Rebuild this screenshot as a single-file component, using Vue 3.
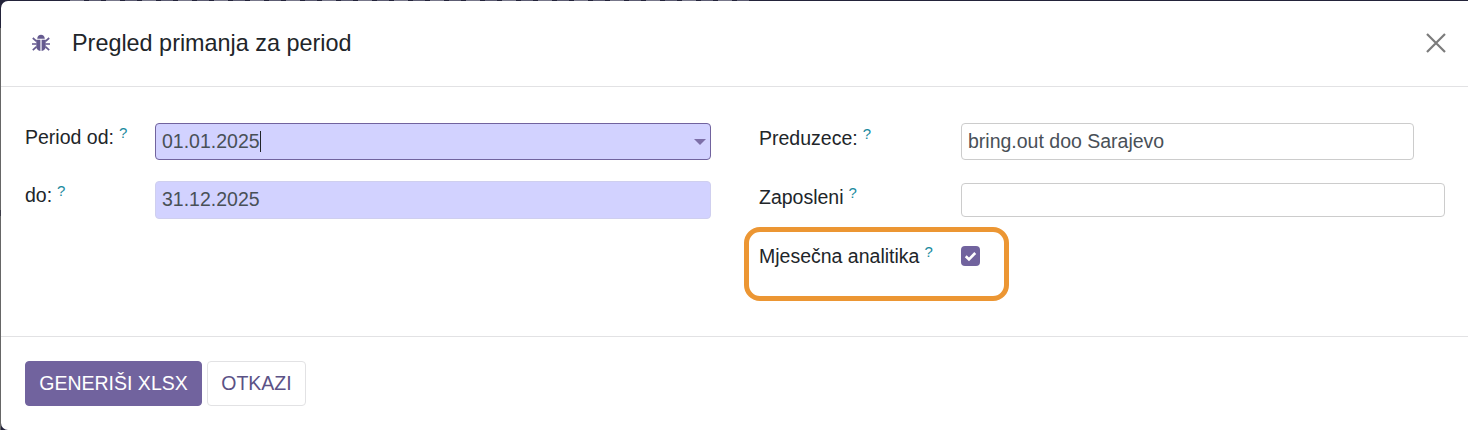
<template>
  <div class="backdrop">
    <div class="dialog">
      <header class="head">
        <svg class="bug" viewBox="0 0 20 20" aria-hidden="true">
          <path d="M6.2 5.800C6.300 3.400 8 1.800 10 1.800s3.700 1.600 3.800 4z" />
          <path d="M5.300 6.800h4.100v11.100c-2.500-.2-4.100-1.800-4.100-4.300zM10.600 6.800h4.100v6.800c0 2.500-1.600 4.100-4.100 4.300z" />
          <path class="legs" d="M1.800 5l3.800 3.400M18.200 5l-3.800 3.400M1 11h4.500M19 11h-4.500M1.800 17.200l3.800-3.500M18.200 17.200l-3.800-3.500" />
        </svg>
        <h1 class="title">Pregled primanja za period</h1>
        <svg class="close" viewBox="0 0 20 20" aria-hidden="true">
          <path d="M1 1l18 18M19 1L1 19" />
        </svg>
      </header>

      <section class="body">
        <div class="col">
          <div class="row row-first">
            <label>Period od:<sup>?</sup></label>
            <div class="input required focused">
              <span>01.01.2025</span><i class="caret"></i>
              <b class="arrow"></b>
            </div>
          </div>
          <div class="row row-second">
            <label>do:<sup>?</sup></label>
            <div class="input required tall"><span>31.12.2025</span></div>
          </div>
        </div>

        <div class="col col-right">
          <div class="row row-first">
            <label>Preduzece:<sup>?</sup></label>
            <div class="input plain company"><span>bring.out doo Sarajevo</span></div>
          </div>
          <div class="row row-second">
            <label>Zaposleni<sup>?</sup></label>
            <div class="input plain short"></div>
          </div>
          <div class="row row-third">
            <label>Mjesečna analitika<sup>?</sup></label>
            <span class="check">
              <svg viewBox="0 0 20 20" aria-hidden="true"><path d="M5 10.300l3.400 3.300 6.600-6.800" /></svg>
            </span>
          </div>
          <div class="highlight"></div>
        </div>
      </section>

      <footer class="foot">
        <button class="btn primary">GENERIŠI XLSX</button>
        <button class="btn secondary">OTKAZI</button>
      </footer>
    </div>
  </div>
</template>

<script setup>
</script>

<style>
html, body {
  margin: 0;
  background: #23233a;
}
</style>

<style scoped>
.backdrop {
  width: 1468px;
  height: 430px;
  padding: 1px 0 0 1px;
  box-sizing: border-box;
  overflow: hidden;
  background:
    repeating-linear-gradient(90deg, #77778a 0 14px, #23233a 14px 19px, #5c5c72 19px 31px, #23233a 31px 36px) 70px 0 / 680px 1px no-repeat,
    linear-gradient(#23233a 0 28px, #666 28px 210px, #3c3c48 210px 216px, #666 216px) 0 0 / 1px 100% no-repeat,
    #23233a;
  font-family: "Liberation Sans", Arial, sans-serif;
  color: #212529;
}

.dialog {
  height: 429px;
  background: #fff;
  border-radius: 7px 0 0 7px;
  display: flex;
  flex-direction: column;
}

.head {
  height: 86px;
  flex: none;
  box-sizing: border-box;
  border-bottom: 1px solid #e2e2e4;
  display: flex;
  align-items: center;
  padding: 0 22px 1px 30px;
}

.bug {
  width: 20px;
  height: 20px;
  fill: #655a8f;
}

.bug .legs {
  fill: none;
  stroke: #655a8f;
  stroke-width: 1.700;
}

.title {
  margin: 0 0 0 21px;
  font-size: 23.400px;
  font-weight: 400;
  line-height: 28px;
  flex: 1;
}

.close {
  width: 20px;
  height: 20px;
  fill: none;
  stroke: #7b7b7b;
  stroke-width: 2.200;
}

.body {
  height: 250px;
  flex: none;
  box-sizing: border-box;
  border-bottom: 1px solid #e2e2e4;
  padding: 36px 22px 0 24px;
  display: grid;
  grid-template-columns: 686px 686px;
  column-gap: 48px;
  align-content: start;
}

.col {
  display: flex;
  flex-direction: column;
  align-items: stretch;
}

.col-right {
  position: relative;
}

.row {
  display: grid;
  grid-template-columns: 130px 1fr;
  align-items: start;
}

.col-right .row {
  grid-template-columns: 202px 1fr;
}

.row-first {
  height: 58px;
}

.row-second {
  height: 60px;
}

.col-right .row-second {
  height: 61px;
}

.col-right .row-first label {
  margin-top: 1px;
}

.col-right .row-second label {
  margin-top: 2px;
}

label {
  font-size: 19.500px;
  line-height: 28px;
  white-space: nowrap;
}

sup {
  font-size: 15px;
  line-height: 0;
  color: #1a8a9e;
  margin-left: 5px;
  position: relative;
  top: 1px;
  vertical-align: super;
}

.input {
  box-sizing: border-box;
  height: 37px;
  border: 1px solid #cccccc;
  border-radius: 4px;
  padding: 0 6px;
  display: flex;
  align-items: center;
  font-size: 19.500px;
  color: #495057;
  position: relative;
}

.required {
  background: #d2d2ff;
  border-color: #cfcfef;
}

.focused {
  border-color: #71639e;
}

.tall {
  height: 38px;
  padding-bottom: 2px;
}

.company {
  width: 453px;
}

.short {
  height: 34px;
  width: 484px;
  margin-top: 2px;
}

.caret {
  width: 1px;
  height: 21px;
  background: #212529;
}

.arrow {
  position: absolute;
  right: 4px;
  top: 15px;
  width: 0;
  height: 0;
  border-left: 6px solid transparent;
  border-right: 6px solid transparent;
  border-top: 6px solid #7d6fa8;
}

.check {
  width: 19px;
  height: 20px;
  margin-top: 4px;
  border-radius: 4px;
  background: #71639e;
  display: flex;
}

.check svg {
  width: 19px;
  height: 20px;
  fill: none;
  stroke: #fff;
  stroke-width: 2.800;
}

.highlight {
  position: absolute;
  left: -15px;
  top: 104px;
  width: 265px;
  height: 74px;
  box-sizing: border-box;
  border: 5px solid #ec9633;
  border-radius: 16px;
}

.foot {
  flex: 1;
  padding: 24px 24px 0;
  display: flex;
  align-items: flex-start;
  gap: 5px;
}

.btn {
  font-family: inherit;
  font-size: 19.500px;
  height: 45px;
  border-radius: 4px;
  padding: 0;
  box-sizing: border-box;
}

.primary {
  width: 177px;
  background: #71639e;
  border: 1px solid #71639e;
  color: #fff;
}

.secondary {
  width: 99px;
  background: #fff;
  border: 1px solid #e2e2e4;
  color: #5b5286;
}
</style>
